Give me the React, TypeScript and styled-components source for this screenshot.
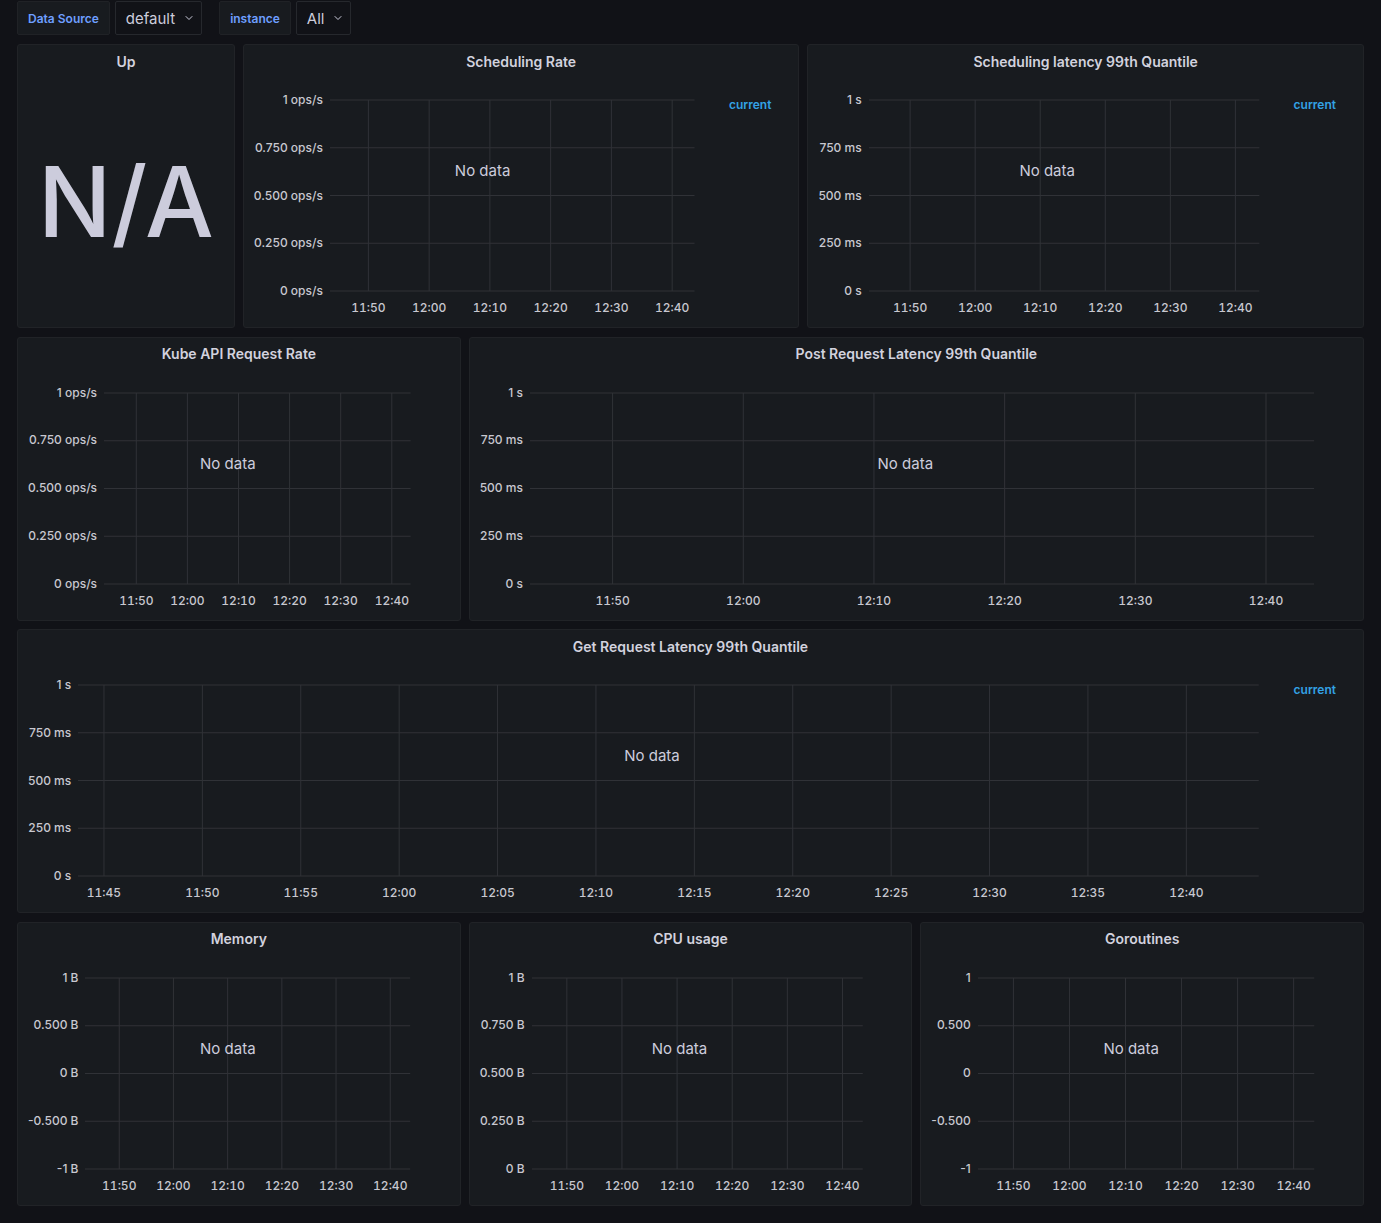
import * as React from 'react';
import styled, { createGlobalStyle } from 'styled-components';
import { ChevronDown } from 'lucide-react';

const GlobalStyle = createGlobalStyle`
  html, body {
    margin: 0;
    padding: 0;
    background: #111217;
  }
  body {
    font-family: Inter, "Noto Sans", sans-serif;
    color: #ccccdc;
  }
`;

const Page = styled.div`
  box-sizing: border-box;
  width: 100%;
  min-height: 100vh;
  padding: 1px 17px 18px;
  background: #111217;
`;

const TopBar = styled.div`
  display: flex;
  gap: 17px;
  height: 34px;
  margin-bottom: 9px;
`;

const VarGroup = styled.div`
  display: flex;
  gap: 5px;
`;

const VarLabel = styled.div`
  display: flex;
  align-items: center;
  box-sizing: border-box;
  height: 34px;
  padding: 0 10px;
  background: #181b1f;
  border: 1px solid #202226;
  border-radius: 2px;
  color: #6e9fff;
  font-size: 12px;
  font-weight: 600;
`;

const VarSelect = styled.div`
  display: flex;
  align-items: center;
  gap: 8px;
  box-sizing: border-box;
  height: 34px;
  padding: 0 6px 0 10px;
  background: #111217;
  border: 1px solid #26282d;
  border-radius: 2px;
  color: #ccccdc;
  font-size: 15px;
`;

const Grid = styled.div`
  display: grid;
  grid-template-columns: repeat(24, minmax(0, 1fr));
  grid-auto-rows: 284px;
  column-gap: 8px;
  row-gap: 8.5px;
`;

const Panel = styled.section<{ $span: number }>`
  grid-column: span ${({ $span }) => $span};
  position: relative;
  display: flex;
  flex-direction: column;
  box-sizing: border-box;
  background: #181b1f;
  border: 1px solid #212327;
  border-radius: 3px;
  overflow: hidden;
`;

const PanelTitle = styled.h2`
  display: flex;
  align-items: center;
  justify-content: center;
  height: 32px;
  margin: 0;
  flex: none;
  color: #d2d2de;
  font-size: 14px;
  font-weight: 600;
`;

const StatBody = styled.div`
  flex: 1;
  display: flex;
  align-items: center;
  justify-content: center;
  padding-bottom: 2px;
  color: #ccccdc;
  font-size: 97px;
  font-weight: 500;
  line-height: 1;
`;

const GraphBody = styled.div<{ $legend: boolean }>`
  display: flex;
  padding: 23px ${({ $legend }) => ($legend ? 27 : 49)}px 0 10px;
`;

const YAxis = styled.div`
  display: flex;
  flex-direction: column;
  justify-content: space-between;
  flex: none;
  height: 205px;
  margin-top: -7px;
  text-align: right;
  color: #c8c8d0;
  font-size: 12px;
  font-weight: 500;
  line-height: 14px;
`;

const Plot = styled.div`
  flex: 1;
  min-width: 0;
  margin-left: 7px;
`;

const PlotSvg = styled.svg`
  display: block;
  width: 100%;
  height: 215px;
  overflow: visible;
  font-family: Inter, sans-serif;
  font-size: 12px;
  font-weight: 500;
  font-variant-numeric: tabular-nums;
`;

const Legend = styled.div`
  flex: none;
  width: 77px;
  margin-top: -2px;
  text-align: right;
  color: #33a2e5;
  font-size: 12px;
  font-weight: 600;
  line-height: 14px;
`;

const NoData = styled.div<{ $legend: boolean }>`
  position: absolute;
  top: 117px;
  left: calc(50% - ${({ $legend }) => ($legend ? 38.5 : 11)}px);
  transform: translateX(-50%);
  color: #ccccdc;
  font-size: 15px;
  line-height: 18px;
  white-space: nowrap;
`;

const AXES: Record<string, string[]> = {
  ops: ['1 ops/s', '0.750 ops/s', '0.500 ops/s', '0.250 ops/s', '0 ops/s'],
  sec: ['1 s', '750 ms', '500 ms', '250 ms', '0 s'],
  mem: ['1 B', '0.500 B', '0 B', '-0.500 B', '-1 B'],
  cpu: ['1 B', '0.750 B', '0.500 B', '0.250 B', '0 B'],
  num: ['1', '0.500', '0', '-0.500', '-1'],
};

// minutes after 11:00, range starts at ~11:43:41 and spans one hour
const RANGE_START = 43.68;
const makeTicks = (step: number) => {
  const ticks: { label: string; pos: number }[] = [];
  for (let m = step === 5 ? 45 : 50; m <= 100; m += step) {
    const h = 11 + Math.floor(m / 60);
    const mm = m % 60;
    ticks.push({
      label: `${h}:${mm < 10 ? '0' : ''}${mm}`,
      pos: ((m - RANGE_START) / 60) * 100,
    });
  }
  return ticks;
};

const PLOT_H = 191;
const GRID = '#303237';

type GraphProps = {
  title: string;
  span: number;
  axis: keyof typeof AXES;
  legend?: boolean;
  step?: number;
};

const Graph = ({ title, span, axis, legend = false, step = 10 }: GraphProps) => {
  const ticks = makeTicks(step);
  return (
    <Panel $span={span}>
      <PanelTitle>{title}</PanelTitle>
      <GraphBody $legend={legend}>
        <YAxis>
          {AXES[axis].map((l) => (
            <span key={l}>{l}</span>
          ))}
        </YAxis>
        <Plot>
          <PlotSvg>
            {[0, 1, 2, 3, 4].map((i) => (
              <line
                key={i}
                x1="0"
                x2="100%"
                y1={(i * PLOT_H) / 4}
                y2={(i * PLOT_H) / 4}
                stroke={GRID}
                strokeWidth={1}
              />
            ))}
            {ticks.map((t) => (
              <line
                key={t.label}
                x1={`${t.pos}%`}
                x2={`${t.pos}%`}
                y1={0}
                y2={PLOT_H}
                stroke={GRID}
                strokeWidth={1}
              />
            ))}
            {ticks.map((t) => (
              <text
                key={`l-${t.label}`}
                x={`${t.pos}%`}
                y={PLOT_H + 20.5}
                textAnchor="middle"
                fill="#c8c8d0"
              >
                {t.label}
              </text>
            ))}
          </PlotSvg>
        </Plot>
        {legend && <Legend>current</Legend>}
      </GraphBody>
      <NoData $legend={legend}>No data</NoData>
    </Panel>
  );
};

export default function App() {
  return (
    <Page>
      <GlobalStyle />
      <TopBar>
        <VarGroup>
          <VarLabel>Data Source</VarLabel>
          <VarSelect>
            default <ChevronDown size={12} strokeWidth={2} />
          </VarSelect>
        </VarGroup>
        <VarGroup>
          <VarLabel>instance</VarLabel>
          <VarSelect>
            All <ChevronDown size={12} strokeWidth={2} />
          </VarSelect>
        </VarGroup>
      </TopBar>
      <Grid>
        <Panel $span={4}>
          <PanelTitle>Up</PanelTitle>
          <StatBody>N/A</StatBody>
        </Panel>
        <Graph title="Scheduling Rate" span={10} axis="ops" legend />
        <Graph title="Scheduling latency 99th Quantile" span={10} axis="sec" legend />
        <Graph title="Kube API Request Rate" span={8} axis="ops" />
        <Graph title="Post Request Latency 99th Quantile" span={16} axis="sec" />
        <Graph title="Get Request Latency 99th Quantile" span={24} axis="sec" legend step={5} />
        <Graph title="Memory" span={8} axis="mem" />
        <Graph title="CPU usage" span={8} axis="cpu" />
        <Graph title="Goroutines" span={8} axis="num" />
      </Grid>
    </Page>
  );
}
